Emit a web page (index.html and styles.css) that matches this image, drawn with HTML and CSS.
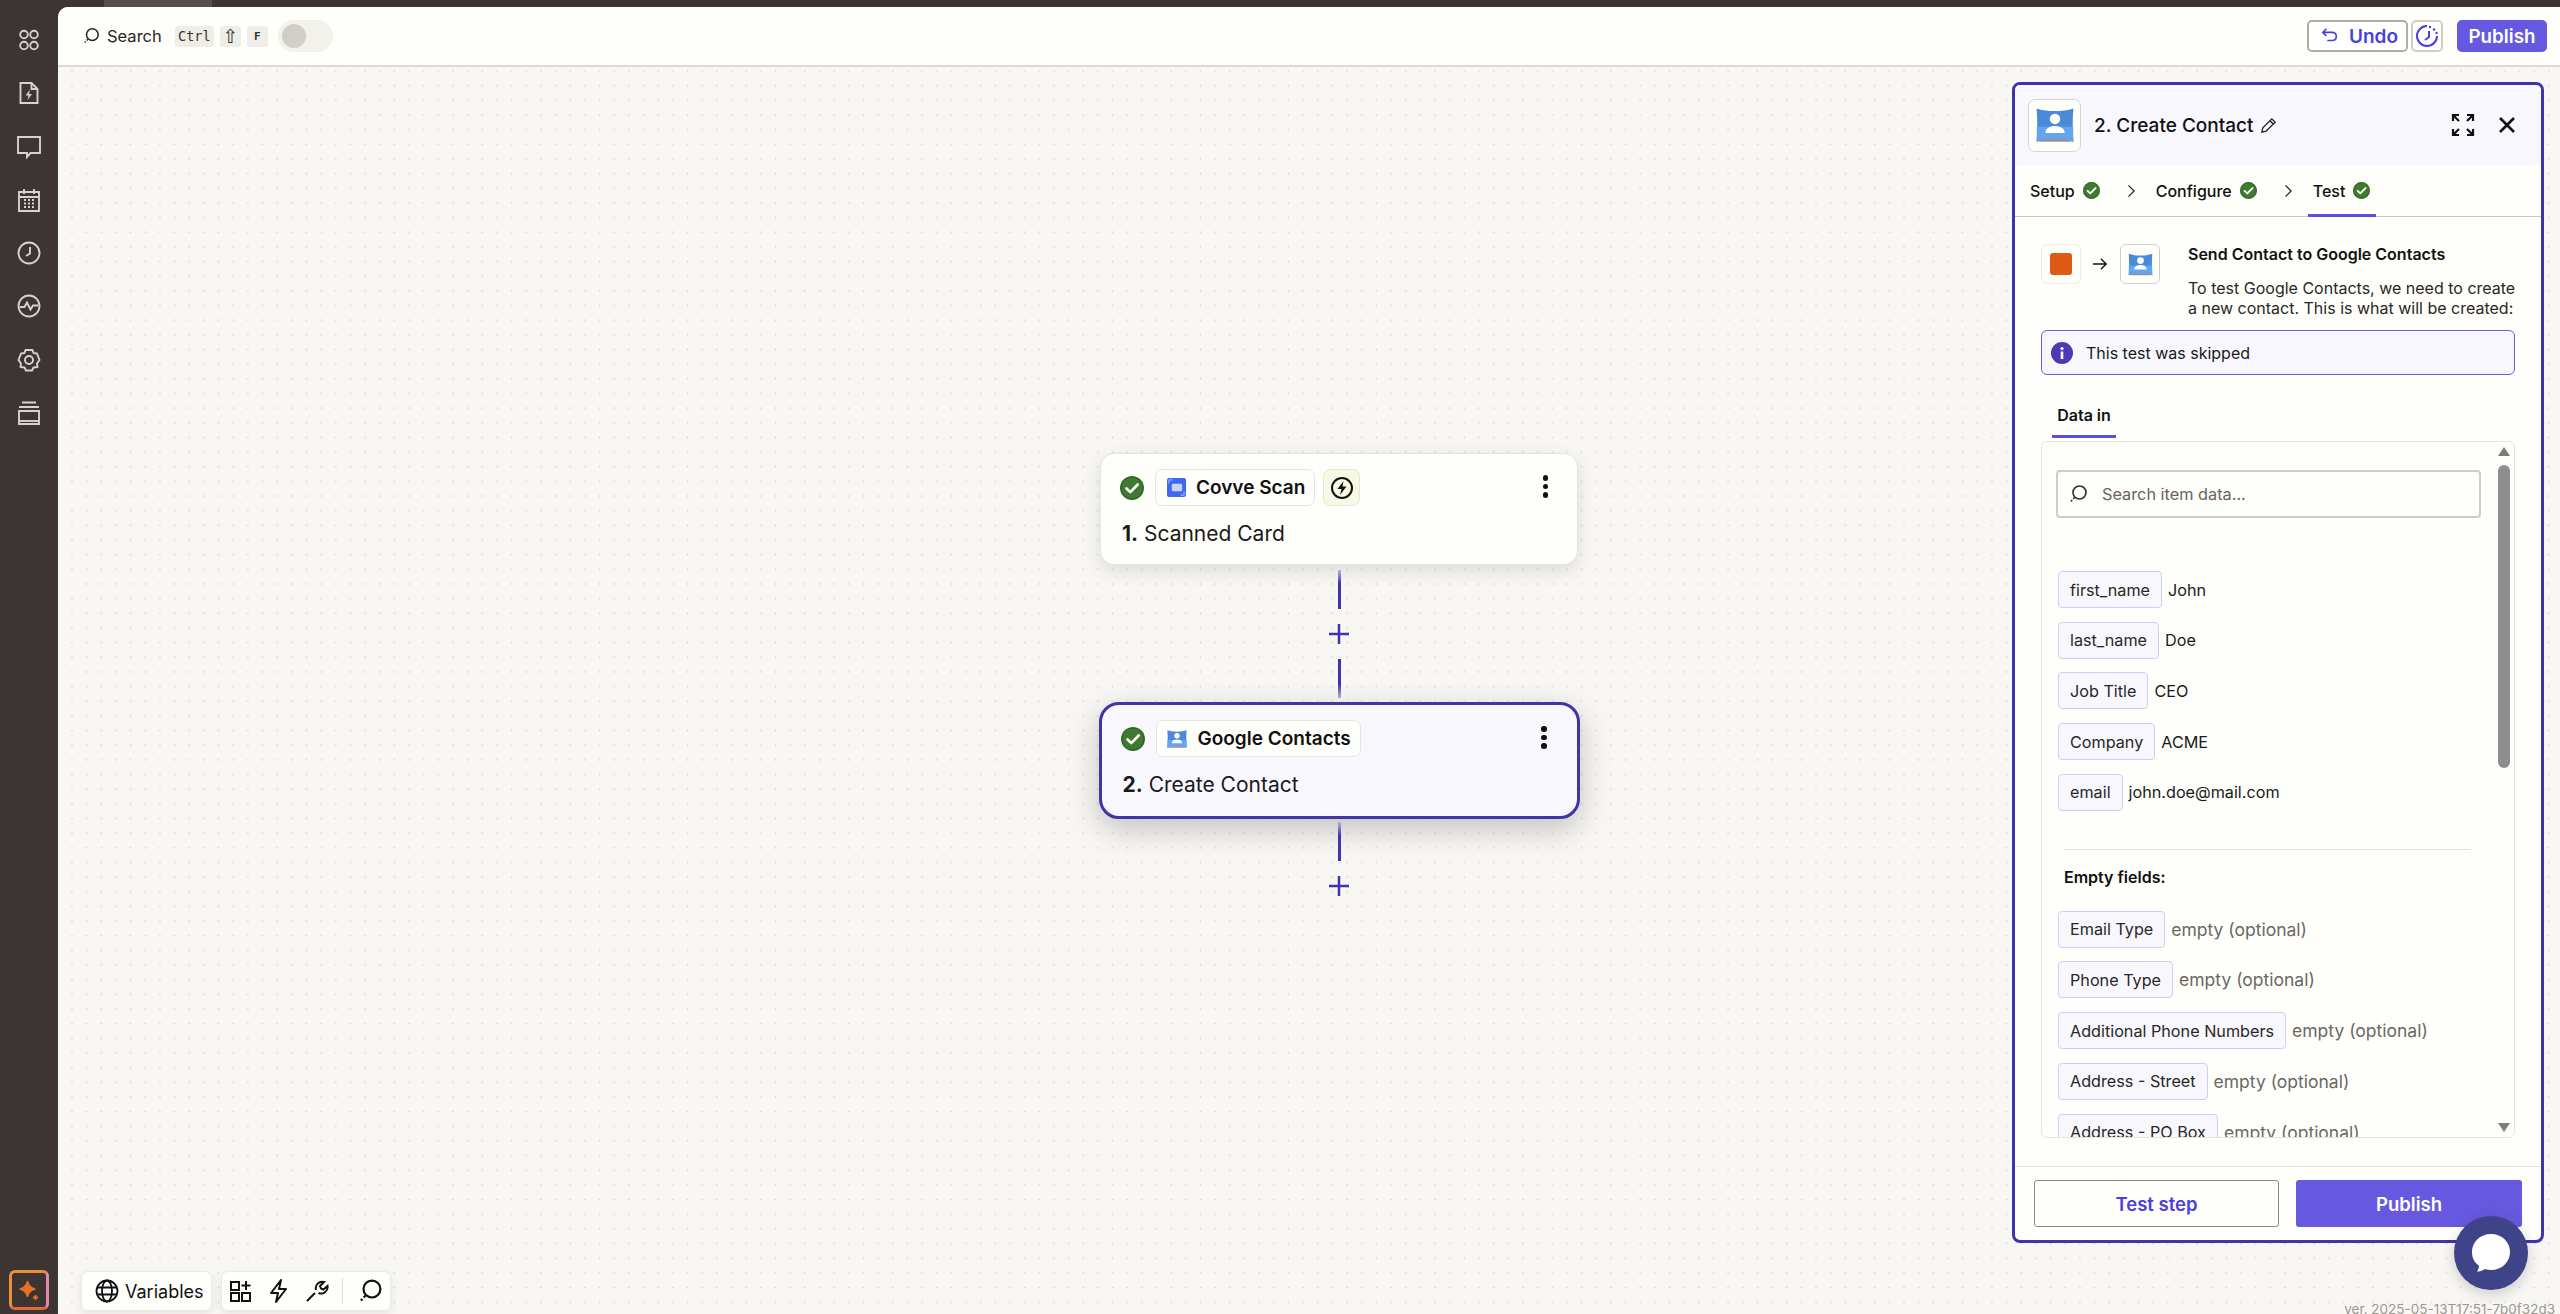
FILE: index.html
```html
<!DOCTYPE html>
<html lang="en">
<head>
<meta charset="utf-8">
<title>Create Contact</title>
<link rel="stylesheet" href="styles.css">
</head>
<body>
<svg class="defs" width="0" height="0" aria-hidden="true">
  <symbol id="check" viewBox="0 0 24 24"><circle cx="12" cy="12" r="12" fill="#3f7a30"/><circle cx="12" cy="12" r="11" fill="none" stroke="#2f5f24" stroke-width="1"/><path d="M6.500 12.500l3.800 3.600 7.400-7.600" fill="none" stroke="#fff" stroke-width="2.600" stroke-linecap="round" stroke-linejoin="round"/></symbol>
  <symbol id="gc" viewBox="0 0 24 24"><path d="M1.500 2.500c3 1 6.500 1.500 10.500 1.500s7.500-.5 10.500-1.500c-.5 6-.5 13 0 19-3-1-6.500-1.500-10.500-1.500s-7.500 .5-10.500 1.500c.5-6 .5-13 0-19z" fill="#4a8ad8"/><path d="M1.600 13h20.800c0 3 0 5.800.1 8.500-3-1-6.500-1.500-10.500-1.500s-7.500 .5-10.500 1.500c.1-2.700.1-5.500.1-8.500z" fill="#62a6ee"/><path d="M3 20.300c3-.6 6-.8 9-.8s6 .2 9 .8v1.200H3z" fill="#8a94a8"/><circle cx="12" cy="8.500" r="3" fill="#fff"/><path d="M6.500 16.500c0-2.800 2.500-4 5.500-4s5.500 1.200 5.500 4z" fill="#fff"/></symbol>
  <symbol id="search" viewBox="0 0 20 20"><circle cx="11.500" cy="8.500" r="6.500" fill="none" stroke="currentColor" stroke-width="1.700"/><path d="M6.500 13.500l-3.500 3.800" fill="none" stroke="currentColor" stroke-width="1.700" stroke-dasharray="2 1.500"/></symbol>
</svg>
<div class="strip-tab"></div>
<div class="app">
  <nav class="rail">
    <svg class="ri" viewBox="0 0 24 24"><circle cx="7" cy="6.500" r="3.800"/><circle cx="17" cy="6.500" r="3.800"/><circle cx="7" cy="17.500" r="3.800"/><circle cx="17" cy="17.500" r="3.800"/></svg>
    <svg class="ri" viewBox="0 0 24 24"><path d="M3.500 2h11l6 6v14h-17z"/><path d="M14.500 2v6h6"/><path d="M13 8.500l-4.500 6h3l-1 4.500 4.500-6h-3z" fill="#d6d3cc" stroke="none"/></svg>
    <svg class="ri" viewBox="0 0 24 24"><path d="M1 2h22v16H13.500L10 22v-4H1z"/></svg>
    <svg class="ri" viewBox="0 0 24 24"><path d="M2 4h20v19H2zM2 9h20M7 1v5M17 1v5"/><path d="M7 12h2M11 12h2M15 12h2M7 15.500h2M11 15.500h2M15 15.500h2M7 19h2M11 19h2M15 19h2" stroke-width="2"/></svg>
    <svg class="ri" viewBox="0 0 24 24"><circle cx="12" cy="12" r="10.500"/><path d="M13 6v6.500l-4 2.500"/></svg>
    <svg class="ri" viewBox="0 0 24 24"><circle cx="12" cy="12" r="10.500"/><path d="M3 13h4.500l2.500-4.500 3.500 7 2.500-4h5"/></svg>
    <svg class="ri" viewBox="0 0 24 24"><path d="M8.500 2l-1 3-3.500.5L1.500 12 4 15.500l-.5 3.500 4 .5 1.500 3h6l1.500-3 4-.5-.5-3.500 2.500-3.500L20 5.500 16.500 5l-1-3z" stroke-linejoin="round"/><circle cx="12" cy="12" r="4"/></svg>
    <svg class="ri" viewBox="0 0 24 24"><path d="M5 1.500h14M2 6h20M2 10h20v13H2z"/><path d="M2 20h20"/></svg>
    <div class="rail-fill"></div>
    <div class="spark">
      <svg viewBox="0 0 24 24" width="24" height="24"><path d="M10.500 4c1 4 3 6 7 7-4 1-6 3-7 7-1-4-3-6-7-7 4-1 6-3 7-7z" fill="#e8702a" stroke="#e8702a" stroke-width="2" stroke-linejoin="round"/><path d="M18.500 17v5M16 19.500h5" stroke="#e8702a" stroke-width="1.800"/></svg>
    </div>
  </nav>
  <main class="main">
    <header class="topbar">
      <svg class="ic18 search-ic"><use href="#search"/></svg>
      <span class="search-label">Search</span>
      <span class="kbd kbd-ctrl">Ctrl</span>
      <span class="kbd kbd-shift">⇧</span>
      <span class="kbd kbd-f">F</span>
      <span class="toggle"><span class="knob"></span></span>
      <span class="grow"></span>
      <button class="btn-undo">
        <svg viewBox="0 0 20 20" width="18" height="18"><path d="M6 2L2 6l4 4M2.500 6H12c3 0 5 2 5 4.500S15 15 12 15H7" fill="none" stroke="#4a3fdc" stroke-width="1.800"/></svg>
        <span>Undo</span>
      </button>
      <button class="btn-hist">
        <svg viewBox="0 0 24 24" width="24" height="24"><path d="M12 2a10 10 0 1 0 10 10" fill="none" stroke="#4a3fdc" stroke-width="2"/><path d="M14 7v6l-4 3" fill="none" stroke="#4a3fdc" stroke-width="2"/><circle cx="15" cy="3" r="1.200" fill="#4a3fdc"/><circle cx="19" cy="5.500" r="1.200" fill="#4a3fdc"/><circle cx="21.500" cy="9" r="1.200" fill="#4a3fdc"/></svg>
      </button>
      <button class="btn-pub">Publish</button>
    </header>
    <section class="canvas">
      <div class="flow">
        <article class="node">
          <div class="node-head">
            <svg class="ic24"><use href="#check"/></svg>
            <span class="chip">
              <svg class="chip-icon" viewBox="0 0 20 20"><rect width="20" height="20" rx="2" fill="#3f68f0"/><rect x="5" y="6" width="11" height="8" rx="1.500" fill="#c6d3fb"/><path d="M2 6V2h4M18 14v4h-4" fill="none" stroke="#a9bcf8" stroke-width="1"/></svg>
              <span>Covve Scan</span>
            </span>
            <span class="bolt">
              <svg viewBox="0 0 24 24" width="24" height="24"><circle cx="12" cy="12" r="10" fill="none" stroke="#111" stroke-width="2"/><path d="M13.500 5l-6 8h4l-1.500 6 6.500-8.500h-4z" fill="#111"/></svg>
            </span>
            <span class="grow"></span>
            <span class="kebab"><i></i><i></i><i></i></span>
          </div>
          <p class="node-title"><b>1.</b> Scanned Card</p>
        </article>
        <div class="line line-down"></div>
        <div class="plus"><svg viewBox="0 0 22 22" width="22" height="22"><path d="M11 1v20M1 11h20" stroke="#3f34a8" stroke-width="2.500"/></svg></div>
        <div class="line line-up"></div>
        <article class="node node-active">
          <div class="node-head">
            <svg class="ic24"><use href="#check"/></svg>
            <span class="chip">
              <svg class="chip-icon-gc"><use href="#gc"/></svg>
              <span>Google Contacts</span>
            </span>
            <span class="grow"></span>
            <span class="kebab"><i></i><i></i><i></i></span>
          </div>
          <p class="node-title"><b>2.</b> Create Contact</p>
        </article>
        <div class="line line-down line-after"></div>
        <div class="plus"><svg viewBox="0 0 22 22" width="22" height="22"><path d="M11 1v20M1 11h20" stroke="#3f34a8" stroke-width="2.500"/></svg></div>
      </div>

      <aside class="panel">
        <div class="panel-head">
          <span class="app-box"><svg class="ic40"><use href="#gc"/></svg></span>
          <span class="panel-title">2. Create Contact</span>
          <svg class="pencil" viewBox="0 0 18 18" width="17" height="17"><path d="M2 16l1-4.500L12.500 2l3.500 3.500L6.500 15zM10.500 4l3.500 3.500" fill="none" stroke="#222" stroke-width="1.400"/></svg>
          <span class="grow"></span>
          <svg class="expand" viewBox="0 0 24 24" width="24" height="24"><path d="M2 8V2h6M2 2l6 6M22 8V2h-6M22 2l-6 6M2 16v6h6M2 22l6-6M22 16v6h-6M22 22l-6-6" fill="none" stroke="#111" stroke-width="2.200"/></svg>
          <svg class="close" viewBox="0 0 18 18" width="18" height="18"><path d="M2 2l14 14M16 2L2 16" stroke="#111" stroke-width="2.600"/></svg>
        </div>
        <div class="tabs">
          <span class="tab">Setup <svg class="ic17"><use href="#check"/></svg></span>
          <svg class="chev" viewBox="0 0 10 16" width="9" height="14"><path d="M1.500 1.500L8 8l-6.500 6.500" fill="none" stroke="#222" stroke-width="1.400"/></svg>
          <span class="tab">Configure <svg class="ic17"><use href="#check"/></svg></span>
          <svg class="chev" viewBox="0 0 10 16" width="9" height="14"><path d="M1.500 1.500L8 8l-6.500 6.500" fill="none" stroke="#222" stroke-width="1.400"/></svg>
          <span class="tab tab-on">Test <svg class="ic17"><use href="#check"/></svg></span>
        </div>
        <div class="panel-body">
          <div class="intro">
            <div class="intro-icons">
              <span class="mini"><span class="orange"></span></span>
              <svg viewBox="0 0 18 16" width="16" height="14"><path d="M1 8h15M10 2l6 6-6 6" fill="none" stroke="#111" stroke-width="1.600"/></svg>
              <span class="mini mini-dark"><svg class="ic26"><use href="#gc"/></svg></span>
            </div>
            <div class="intro-text">
              <h3>Send Contact to Google Contacts</h3>
              <p>To test Google Contacts, we need to create<br>a new contact. This is what will be created:</p>
            </div>
          </div>
          <div class="alert">
            <svg viewBox="0 0 22 22" width="22" height="22"><circle cx="11" cy="11" r="11" fill="#4a3bb0"/><rect x="9.700" y="9.500" width="2.600" height="7.500" fill="#fff"/><circle cx="11" cy="6.500" r="1.600" fill="#fff"/></svg>
            <span>This test was skipped</span>
          </div>
          <div class="data-tab"><span>Data in</span></div>
          <div class="data-box">
            <label class="data-search">
              <svg class="ic20"><use href="#search"/></svg>
              <span>Search item data...</span>
            </label>
            <ul class="rows">
              <li><span class="pill">first_name</span><span class="val">John</span></li>
              <li><span class="pill">last_name</span><span class="val">Doe</span></li>
              <li><span class="pill">Job Title</span><span class="val">CEO</span></li>
              <li><span class="pill">Company</span><span class="val">ACME</span></li>
              <li><span class="pill">email</span><span class="val">john.doe@mail.com</span></li>
            </ul>
            <hr class="divider">
            <h4 class="empty-head">Empty fields:</h4>
            <ul class="rows">
              <li><span class="pill">Email Type</span><span class="empty">empty (optional)</span></li>
              <li><span class="pill">Phone Type</span><span class="empty">empty (optional)</span></li>
              <li><span class="pill">Additional Phone Numbers</span><span class="empty">empty (optional)</span></li>
              <li><span class="pill">Address - Street</span><span class="empty">empty (optional)</span></li>
              <li><span class="pill">Address - PO Box</span><span class="empty">empty (optional)</span></li>
            </ul>
            <div class="scrollbar">
              <span class="arrow-up"></span>
              <span class="thumb"></span>
              <span class="arrow-down"></span>
            </div>
          </div>
        </div>
        <div class="panel-foot">
          <button class="foot-test">Test step</button>
          <button class="foot-pub">Publish</button>
        </div>
      </aside>

      <div class="tools">
        <div class="tool-pill tool-vars">
          <svg viewBox="0 0 24 24" width="24" height="24"><g fill="none" stroke="#111" stroke-width="1.800"><circle cx="12" cy="12" r="10.500"/><ellipse cx="12" cy="12" rx="5" ry="10.500"/><path d="M2 8.500h20M2 15.500h20"/></g></svg>
          <span>Variables</span>
        </div>
        <div class="tool-pill tool-icons">
          <svg viewBox="0 0 24 24" width="24" height="24"><path d="M2 3h8v8H2zM2 14h8v8H2zM13 14h8v8h-8zM17 2v9M12.500 6.500h9" fill="none" stroke="#111" stroke-width="2"/></svg>
          <svg viewBox="0 0 24 24" width="24" height="24"><path d="M14 1L4 14h7l-2 9 10-13h-7z" fill="none" stroke="#111" stroke-width="2" stroke-linejoin="round"/></svg>
          <svg viewBox="0 0 24 24" width="24" height="24"><path d="M2 22l8-8M11 11a6.500 6.500 0 0 1 8-8l-4 4 1 2.500 2.500 1 4-3.500a6.500 6.500 0 0 1-9 7" fill="none" stroke="#111" stroke-width="2"/></svg>
          <span class="tool-sep"></span>
          <svg class="ic24b"><use href="#search"/></svg>
        </div>
      </div>

      <button class="chat" aria-label="Chat">
        <svg viewBox="0 0 40 40" width="40" height="40"><path d="M20 1c11 0 19 8 19 18s-8 18-19 18c-2 0-4-.3-6-1-2 1.500-4.500 2.500-8 2.500 1.500-2 2-4 1.800-6C3 29 1 24.500 1 19 1 9 9 1 20 1z" fill="#fff"/></svg>
      </button>
      <div class="version">ver. 2025-05-13T17:51-7b0f32d3</div>
    </section>
  </main>
</div>
</body>
</html>
```
FILE: styles.css
```css
* { box-sizing: border-box; }
html, body { margin: 0; height: 100%; overflow: hidden; }
body { background: #3d3533; font-family: Inter, "Liberation Sans", sans-serif; color: #111; }
.defs { position: absolute; }
.strip-tab { position: absolute; left: 104px; top: 0; width: 108px; height: 7px; background: #56504d; }
.app { display: grid; grid-template-columns: 58px 1fr; height: 1314px; padding-top: 7px; }
.grow { flex: 1; }
button { font-family: inherit; cursor: pointer; }

.rail { display: flex; flex-direction: column; align-items: center; padding-top: 21px; gap: 29.300px; }
.ri { width: 24px; height: 24px; fill: none; stroke: #d6d3cc; stroke-width: 1.900; flex: none; }
.rail-fill { flex: 1; }
.spark { width: 40px; height: 40px; margin-bottom: 4px; border-radius: 6px; border: 3px solid #e8913c; border-right-color: #e488b0; border-bottom-color: #e56a2f; display: flex; align-items: center; justify-content: center; background: #3d3533; flex: none; }

.main { display: flex; flex-direction: column; background: #fefefb; border-top-left-radius: 10px; overflow: hidden; min-width: 0; }
.topbar { height: 60px; flex: none; display: flex; align-items: center; padding: 0 13px 0 24px; background: #fefefb; border-bottom: 2px solid #dcd9d2; }
.ic18 { width: 18px; height: 18px; }
.search-ic { color: #222; }
.search-label { margin-left: 7px; font-size: 16.500px; color: #2a2625; }
.kbd { height: 21px; background: #eeede6; border-radius: 3px; display: flex; align-items: center; justify-content: center; font-family: "DejaVu Sans Mono", monospace; color: #333; flex: none; }
.kbd-ctrl { width: 39px; margin-left: 13px; font-size: 13.500px; }
.kbd-shift { width: 21px; margin-left: 6px; font-size: 19px; font-family: "DejaVu Sans", sans-serif; }
.kbd-f { width: 21px; margin-left: 6px; font-size: 11px; font-weight: 700; }
.toggle { width: 55px; height: 32px; margin-left: 10px; border-radius: 16px; background: #f2f1ea; padding: 4px; display: block; }
.knob { display: block; width: 24px; height: 24px; border-radius: 50%; background: #d0cec6; }
.btn-undo { width: 101px; height: 32px; display: flex; align-items: center; gap: 10px; padding: 0 0 0 12px; background: #fff; border: 2px solid #b0aea4; border-radius: 5px; color: #4a3fdc; font-size: 19px; font-weight: 600; }
.btn-hist { width: 32px; height: 32px; margin-left: 3px; padding: 0; display: flex; align-items: center; justify-content: center; background: #fff; border: 2px solid #d0cec6; border-radius: 5px; }
.btn-pub { width: 90px; height: 32px; margin-left: 14px; background: #6759df; border: 0; border-radius: 5px; color: #fff; font-size: 18.800px; font-weight: 600; padding: 0; }

.canvas { flex: 1; position: relative; background-color: #f8f7f4; background-image: radial-gradient(circle, #d8d6cf .8px, transparent 1.100px); background-size: 14.670px 14.670px; background-position: 6.670px -3.330px; }

.flow { position: absolute; left: 1038px; top: 386px; width: 486px; display: flex; flex-direction: column; align-items: center; }
.node { width: 478px; height: 112px; background: #fefefb; border: 1px solid #e6e4dc; border-radius: 14px; padding: 15px 19px 0 19px; box-shadow: 0 6px 18px rgba(60,55,50,.14); }
.node-active { width: 481px; height: 117px; margin-top: 4px; background: #f7f7fd; border: 3px solid #3f34a8; border-radius: 20px; padding: 15px 20px 0 19px; box-shadow: 0 10px 30px rgba(40,35,30,.25); }
.node-head { display: flex; align-items: center; height: 37px; }
.ic24 { width: 24px; height: 24px; flex: none; }
.chip { height: 37px; margin-left: 11px; display: flex; align-items: center; gap: 10px; padding: 0 9px 0 11px; background: #fefefb; border: 1.500px solid #e8e6dc; border-radius: 7px; font-size: 19px; font-weight: 600; white-space: nowrap; }
.chip-icon { width: 19px; height: 19px; flex: none; }
.chip-icon-gc { width: 22px; height: 22px; flex: none; margin-left: -2px; }
.bolt { width: 37px; height: 37px; margin-left: 8px; display: flex; align-items: center; justify-content: center; background: #f7f9e2; border: 1.500px solid #e8e6dc; border-radius: 7px; }
.kebab { display: flex; flex-direction: column; gap: 3px; margin-right: 10px; margin-top: -2px; }
.kebab i { width: 5.500px; height: 5.500px; border-radius: 50%; background: #111; display: block; }
.node-title { margin: 14px 0 0 2px; font-size: 21px; line-height: 28px; color: #1a1a1a; white-space: nowrap; }
.node-title b { font-weight: 700; }
.line { width: 3px; height: 39px; flex: none; }
.line-down { margin-top: 5px; background: linear-gradient(#b9b3ea, #3f34a8 35%); }
.line-up { background: linear-gradient(#3f34a8 65%, #b9b3ea); }
.line-after { margin-top: 3px; }
.plus { height: 50px; display: flex; align-items: center; justify-content: center; flex: none; }

.panel { position: absolute; left: 1954px; top: 15px; width: 532px; height: 1161px; display: flex; flex-direction: column; background: #fefefb; border: 3px solid #3f34a8; border-radius: 8px; }
.panel-head { height: 80px; flex: none; display: flex; align-items: center; background: #f7f7fd; padding: 0 25px 0 13px; border-radius: 5px 5px 0 0; }
.app-box { width: 53px; height: 53px; display: flex; align-items: center; justify-content: center; background: #fefefb; border: 1.500px solid #d8d5cc; border-radius: 7px; flex: none; }
.ic40 { width: 42px; height: 42px; }
.panel-title { margin-left: 13px; font-size: 19px; font-weight: 500; }
.pencil { margin-left: 6px; }
.expand { transform: translateX(-1px); }
.close { margin-left: 22px; }
.tabs { height: 52px; flex: none; display: flex; align-items: center; padding: 0 0 0 15px; border-bottom: 1.500px solid #c9c6bc; font-size: 16px; font-weight: 500; }
.tab { position: relative; height: 100%; display: flex; align-items: center; gap: 8px; white-space: nowrap; }
.ic17 { width: 17px; height: 17px; flex: none; }
.chev { margin: 0 20px 0 27px; }
.tab-on { padding-right: 6px; }
.tab-on::before { content: ""; position: absolute; left: -5px; right: 0; bottom: -1px; height: 3px; background: #5a4fe0; }

.panel-body { flex: 1; min-height: 0; display: flex; flex-direction: column; padding: 27px 0 28px 26px; }
.intro { display: flex; height: 86px; flex: none; }
.intro-icons { display: flex; align-items: center; height: 40px; width: 147px; flex: none; }
.intro-icons svg:not(.ic26) { margin: 0 12px 0 11px; flex: none; }
.mini { width: 40px; height: 40px; display: flex; align-items: center; justify-content: center; background: #fefefb; border: 1.500px solid #ebe9e0; border-radius: 6px; flex: none; }
.mini-dark { border-color: #cfccc2; }
.orange { width: 22px; height: 22px; background: #de5a14; border-radius: 3px; }
.ic26 { width: 27px; height: 27px; }
.intro-text h3 { margin: 0; font-size: 16px; line-height: 20px; font-weight: 600; white-space: nowrap; }
.intro-text p { margin: 14px 0 0; font-size: 16px; line-height: 20px; color: #2b2725; white-space: nowrap; }
.alert { width: 474px; height: 45px; flex: none; display: flex; align-items: center; gap: 13px; padding-left: 9px; background: #f7f7fd; border: 1.500px solid #6a5de0; border-radius: 6px; font-size: 16px; color: #1a1a1a; }
.data-tab { height: 66px; flex: none; display: flex; align-items: flex-end; padding: 0 0 3px 11px; }
.data-tab span { width: 64px; height: 32px; text-align: center; font-size: 16px; font-weight: 600; line-height: 18px; white-space: nowrap; border-bottom: 3px solid #5a4fe0; display: block; }
.data-box { position: relative; width: 474px; flex: 1; min-height: 0; overflow: hidden; border: 1.500px solid #e6e4da; border-radius: 6px; padding: 28px 0 0 14px; }
.data-search { width: 425px; height: 48px; display: flex; align-items: center; gap: 14px; padding-left: 10px; border: 2px solid #d0cec4; border-radius: 4px; font-size: 16.300px; color: #6b625f; }
.ic20 { width: 20px; height: 20px; color: #333; }
.rows { list-style: none; margin: 53px 0 0 2px; padding: 0; display: flex; flex-direction: column; gap: 13.700px; }
.rows li { display: flex; align-items: center; height: 37px; gap: 6px; white-space: nowrap; }
.pill { height: 37px; padding: 0 11px; display: flex; align-items: center; background: #f7f7fd; border: 1.500px solid #cfcdf6; border-radius: 4px; font-size: 16.200px; color: #2a2625; }
.val { font-size: 16.200px; color: #1a1a1a; }
.empty { font-size: 17.500px; color: #6b6864; }
.divider { width: 407px; margin: 38px 0 0 8px; border: 0; border-top: 1.500px solid #e6e4da; }
.empty-head { margin: 17px 0 0 8px; font-size: 16px; line-height: 20px; font-weight: 600; }
.empty-head + .rows { margin-top: 24px; }
.scrollbar { position: absolute; right: 4px; top: 0; bottom: 0; width: 12px; }
.arrow-up { position: absolute; top: 5px; left: 0; width: 0; height: 0; border-left: 6px solid transparent; border-right: 6px solid transparent; border-bottom: 9px solid #7d7d7d; }
.thumb { position: absolute; top: 23px; left: 0; width: 12px; height: 303px; border-radius: 6px; background: #8e8e8e; }
.arrow-down { position: absolute; bottom: 5px; left: 0; width: 0; height: 0; border-left: 6px solid transparent; border-right: 6px solid transparent; border-top: 9px solid #7d7d7d; }

.panel-foot { height: 74px; flex: none; display: flex; gap: 17px; padding: 13px 19px 0 19px; border-top: 1.500px solid #e6e4da; }
.foot-test, .foot-pub { height: 47px; border-radius: 3px; font-size: 18.500px; font-weight: 600; padding: 0; }
.foot-test { width: 245px; background: #fefefb; border: 1.500px solid #8c8880; color: #4a3fdc; }
.foot-pub { width: 226px; background: #6759df; border: 0; color: #fff; }

.tools { position: absolute; left: 23px; bottom: 3px; display: flex; gap: 9px; }
.tool-pill { height: 40px; display: flex; align-items: center; background: #fefefb; border: 1px solid #eceae2; border-radius: 7px; box-shadow: 0 3px 8px rgba(60,55,50,.1); }
.tool-vars { width: 131px; gap: 6px; padding-left: 13px; font-size: 18px; }
.tool-icons { width: 170px; gap: 14px; padding-left: 7px; }
.tool-sep { width: 1px; height: 26px; background: #dedcd4; margin: 0 0 0 -1px; }
.ic24b { width: 26px; height: 26px; color: #111; }

.chat { position: absolute; left: 2396px; top: 1149px; width: 74px; height: 74px; padding: 0; border: 0; border-radius: 50%; background: #3f4388; display: flex; align-items: center; justify-content: center; box-shadow: 0 4px 14px rgba(40,35,30,.2); }
.version { position: absolute; right: 5px; top: 1233px; font-size: 13.500px; line-height: 18px; color: #9a9891; white-space: nowrap; }
```
